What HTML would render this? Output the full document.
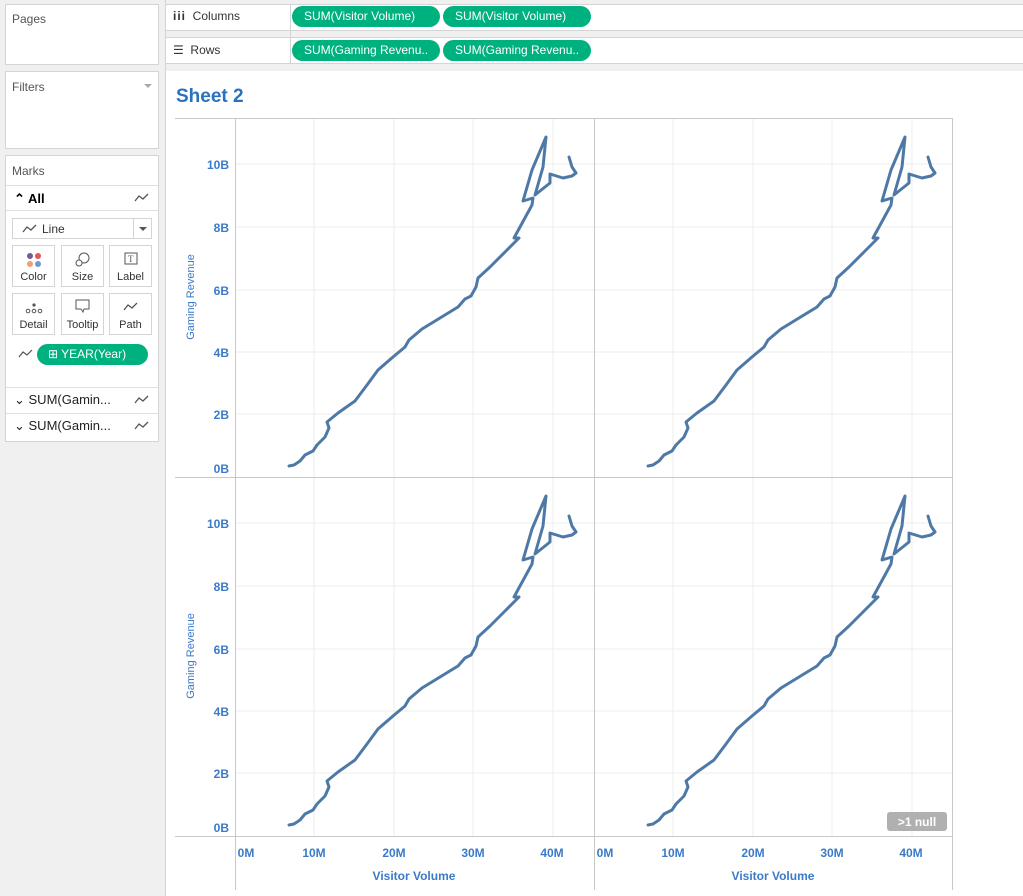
<!DOCTYPE html>
<html><head><meta charset="utf-8"><style>
body{margin:0;width:1023px;height:896px;background:#f0f0f0;font-family:"Liberation Sans",sans-serif;position:relative;overflow:hidden;font-size:12px;color:#333}
.box{position:absolute;background:#fff;border:1px solid #d4d4d4;box-sizing:border-box}
.t{position:absolute;font-size:12px;color:#555}
.pill{position:absolute;height:21px;line-height:21px;background:#00b180;color:#fff;border-radius:11px;font-size:12px;padding-left:12px;box-sizing:border-box;white-space:nowrap;overflow:hidden}
.btn{position:absolute;width:43px;height:42px;border:1px solid #d4d4d4;box-sizing:border-box;background:#fff;font-size:11px;color:#333;text-align:center}
.btn span{position:absolute;bottom:3px;left:0;right:0}
.sep{position:absolute;left:6px;width:152px;height:1px;background:#e0e0e0}
.ax{position:absolute;color:#3b7ac8;font-weight:bold;font-size:12px}
</style></head><body>
<div class="box" style="left:5px;top:4px;width:154px;height:61px"></div>
<div class="t" style="left:12px;top:12px">Pages</div>
<div class="box" style="left:5px;top:71px;width:154px;height:78px"></div>
<div class="t" style="left:12px;top:80px">Filters</div>
<div style="position:absolute;left:144px;top:84px;border:4px solid transparent;border-top:4px solid #aaa"></div>
<div class="box" style="left:5px;top:155px;width:154px;height:287px"></div>
<div class="t" style="left:12px;top:164px">Marks</div>
<div class="sep" style="top:185px"></div>
<div style="position:absolute;left:14px;top:191px;font-size:13px;color:#000;font-weight:bold">⌃ All</div>
<svg style="position:absolute;left:134px;top:193px" width="16" height="10"><path d="M1 8 L5 3 L9 6 L14 1" stroke="#555" fill="none" stroke-width="1.3"/></svg>
<div class="sep" style="top:210px"></div>
<div class="box" style="left:12px;top:218px;width:140px;height:21px"></div>
<svg style="position:absolute;left:22px;top:224px" width="16" height="10"><path d="M1 8 L5 3 L9 6 L14 1" stroke="#555" fill="none" stroke-width="1.3"/></svg>
<div class="t" style="left:42px;top:222px;color:#333">Line</div>
<div style="position:absolute;left:133px;top:219px;width:1px;height:19px;background:#d4d4d4"></div>
<div style="position:absolute;left:139px;top:227px;border:4px solid transparent;border-top:4px solid #555"></div>
<div class="btn" style="left:12px;top:245px"><svg style="position:absolute;left:13px;top:6px" width="16" height="16"><circle cx="4" cy="4" r="3" fill="#7a5a8f"/><circle cx="12" cy="4" r="3" fill="#e4545c"/><circle cx="4" cy="12" r="3" fill="#f0a070"/><circle cx="12" cy="12" r="3" fill="#6e9ad0"/></svg><span>Color</span></div>
<div class="btn" style="left:61px;top:245px"><svg style="position:absolute;left:13px;top:5px" width="16" height="16"><circle cx="9" cy="7" r="5" stroke="#555" fill="none"/><circle cx="4" cy="12" r="3" stroke="#555" fill="#fff"/></svg><span>Size</span></div>
<div class="btn" style="left:109px;top:245px"><svg style="position:absolute;left:14px;top:6px" width="14" height="13"><rect x="1" y="1" width="12" height="11" stroke="#555" fill="none"/><text x="4" y="10" font-size="9" fill="#555" font-family="Liberation Serif">T</text></svg><span>Label</span></div>
<div class="btn" style="left:12px;top:293px"><svg style="position:absolute;left:12px;top:8px" width="18" height="12"><circle cx="9" cy="3" r="1.6" fill="#555"/><circle cx="3" cy="9" r="1.8" stroke="#555" fill="none"/><circle cx="9" cy="9" r="1.8" stroke="#555" fill="none"/><circle cx="15" cy="9" r="1.8" stroke="#555" fill="none"/></svg><span>Detail</span></div>
<div class="btn" style="left:61px;top:293px"><svg style="position:absolute;left:13px;top:5px" width="16" height="15"><path d="M1 1 H14 V10 H9 L8 13 L6 10 H1 Z" stroke="#555" fill="none"/></svg><span>Tooltip</span></div>
<div class="btn" style="left:109px;top:293px"><svg style="position:absolute;left:13px;top:8px" width="16" height="10"><path d="M1 8 L5 3 L9 6 L14 1" stroke="#555" fill="none" stroke-width="1.3"/></svg><span>Path</span></div>
<svg style="position:absolute;left:18px;top:349px" width="16" height="10"><path d="M1 8 L5 3 L9 6 L14 1" stroke="#555" fill="none" stroke-width="1.2"/></svg>
<div class="pill" style="left:37px;top:344px;width:111px;padding-left:11px">⊞ YEAR(Year)</div>
<div class="sep" style="top:387px"></div>
<div style="position:absolute;left:14px;top:392px;font-size:13px;color:#222">⌄ SUM(Gamin...</div>
<svg style="position:absolute;left:134px;top:395px" width="16" height="10"><path d="M1 8 L5 3 L9 6 L14 1" stroke="#555" fill="none" stroke-width="1.3"/></svg>
<div class="sep" style="top:413px"></div>
<div style="position:absolute;left:14px;top:418px;font-size:13px;color:#222">⌄ SUM(Gamin...</div>
<svg style="position:absolute;left:134px;top:421px" width="16" height="10"><path d="M1 8 L5 3 L9 6 L14 1" stroke="#555" fill="none" stroke-width="1.3"/></svg>
<div style="position:absolute;left:165px;top:0;width:1px;height:896px;background:#d4d4d4"></div>
<div class="box" style="left:165px;top:4px;width:870px;height:27px"></div>
<div class="box" style="left:165px;top:37px;width:870px;height:27px"></div>
<div style="position:absolute;left:290px;top:4px;width:1px;height:60px;background:#d4d4d4"></div>
<div class="t" style="left:173px;top:9px;color:#333"><b style="letter-spacing:1px">iii</b>&nbsp; Columns</div>
<div class="t" style="left:173px;top:43px;color:#333">☰&nbsp; Rows</div>
<div class="pill" style="left:292px;top:6px;width:148px">SUM(Visitor Volume)</div>
<div class="pill" style="left:443px;top:6px;width:148px">SUM(Visitor Volume)</div>
<div class="pill" style="left:292px;top:40px;width:148px">SUM(Gaming Revenu..</div>
<div class="pill" style="left:443px;top:40px;width:148px">SUM(Gaming Revenu..</div>
<div style="position:absolute;left:166px;top:71px;width:857px;height:825px;background:#fff"></div>
<div style="position:absolute;left:176px;top:86px;font-size:19px;font-weight:bold;color:#2a72c0">Sheet 2</div>
<svg style="position:absolute;left:0;top:0" width="1023" height="896">
<defs><g id="pane">
<g stroke="#ececec" stroke-width="1">
<line x1="314" y1="118" x2="314" y2="477"/><line x1="394" y1="118" x2="394" y2="477"/><line x1="473" y1="118" x2="473" y2="477"/><line x1="553" y1="118" x2="553" y2="477"/>
<line x1="235" y1="164" x2="594" y2="164"/><line x1="235" y1="227" x2="594" y2="227"/><line x1="235" y1="290" x2="594" y2="290"/><line x1="235" y1="352" x2="594" y2="352"/><line x1="235" y1="414" x2="594" y2="414"/>
</g>
<polyline fill="none" stroke="#4e79a7" stroke-width="3" stroke-linejoin="round" stroke-linecap="round" points="289,466 294,465 300,461 305,455 313,451 317,445 325,437 329,428 327,422 338,413 355,401 367,385 378,370 393,357 405,347 409,340 422,329 440,318 458,307 465,299 471,296 476,287 478,278 490,267 505,252 519,238 514,238 532,205 533,198 523,201 532,170 546,137 543,167 535,195 550,183 550,174 563,178 572,176 576,173 572,167 569,157"/>
</g></defs>
<use href="#pane"/><use href="#pane" transform="translate(359,0)"/><use href="#pane" transform="translate(0,359)"/><use href="#pane" transform="translate(359,359)"/>
<g stroke="#c8c8c8" stroke-width="1">
<line x1="175" y1="118.5" x2="952" y2="118.5"/><line x1="175" y1="477.5" x2="952" y2="477.5"/><line x1="175" y1="836.5" x2="952" y2="836.5"/>
<line x1="235.5" y1="118" x2="235.5" y2="890"/><line x1="594.5" y1="118" x2="594.5" y2="890"/><line x1="952.5" y1="118" x2="952.5" y2="890"/>
</g>
<rect x="887" y="812" width="60" height="19" rx="3" fill="#b0b0b0"/>
<text x="917" y="826" text-anchor="middle" fill="#fff" font-size="12" font-weight="bold" font-family="Liberation Sans">&gt;1 null</text>
<g fill="#3b7ac8" font-size="12" font-weight="bold" font-family="Liberation Sans" text-anchor="end">
<text x="229" y="169">10B</text><text x="229" y="232">8B</text><text x="229" y="295">6B</text><text x="229" y="357">4B</text><text x="229" y="419">2B</text><text x="229" y="473">0B</text>
<text x="229" y="528">10B</text><text x="229" y="591">8B</text><text x="229" y="654">6B</text><text x="229" y="716">4B</text><text x="229" y="778">2B</text><text x="229" y="832">0B</text>
</g>
<g fill="#3b7ac8" font-size="12" font-weight="bold" font-family="Liberation Sans" text-anchor="middle">
<text x="246" y="857">0M</text><text x="314" y="857">10M</text><text x="394" y="857">20M</text><text x="473" y="857">30M</text><text x="552" y="857">40M</text>
<text x="605" y="857">0M</text><text x="673" y="857">10M</text><text x="753" y="857">20M</text><text x="832" y="857">30M</text><text x="911" y="857">40M</text>
<text x="414" y="880">Visitor Volume</text><text x="773" y="880">Visitor Volume</text>
</g>
<g fill="#3b7ac8" font-size="11" font-family="Liberation Sans" text-anchor="middle">
<text transform="translate(194,297) rotate(-90)">Gaming Revenue</text>
<text transform="translate(194,656) rotate(-90)">Gaming Revenue</text>
</g>
</svg>
</body></html>
